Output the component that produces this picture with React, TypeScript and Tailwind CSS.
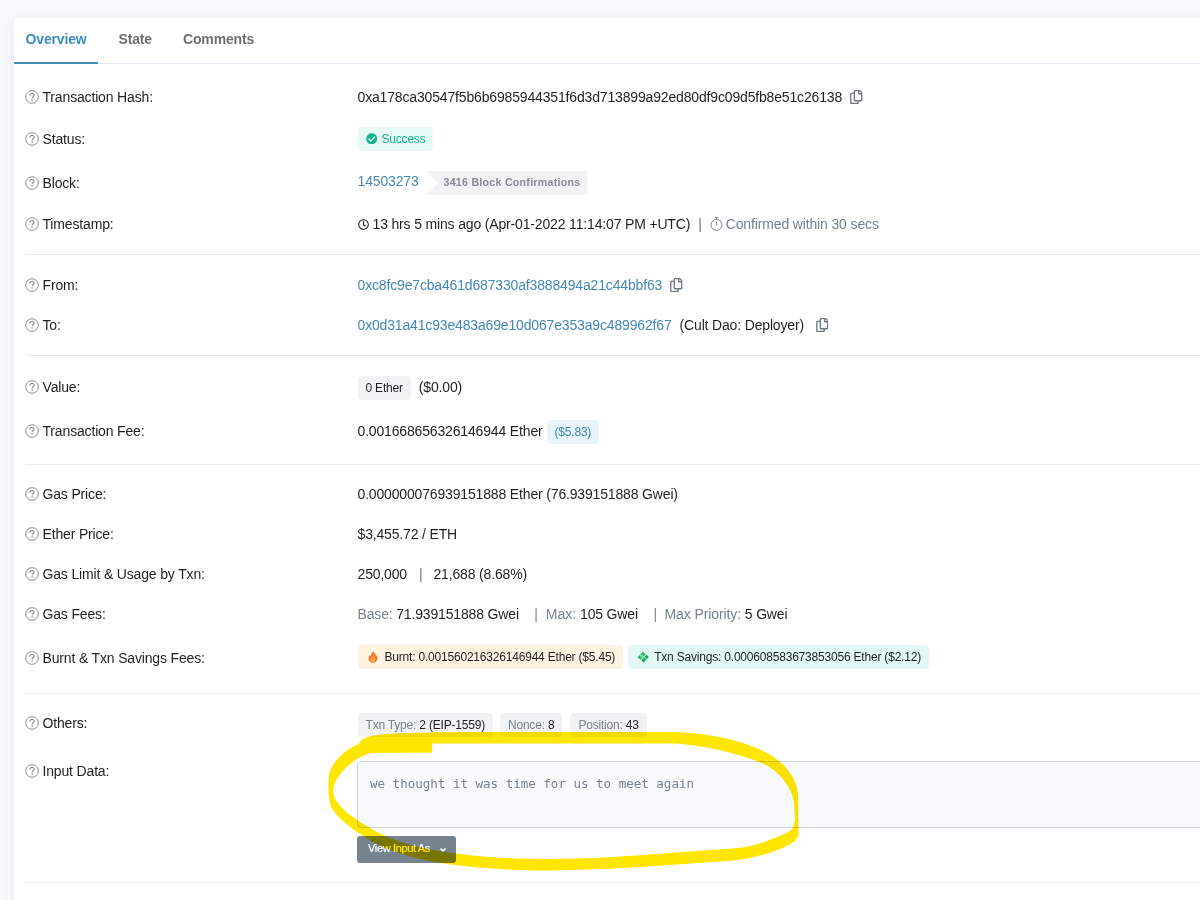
import type { ReactNode } from "react";
import { FaCheckCircle, FaChevronDown, FaRegClock, FaRegCopy } from "react-icons/fa";

function HelpIcon() {
  return (
    <svg viewBox="0 0 14 14" className="w-[14px] h-[14px] shrink-0 text-[#85878b]" fill="none" stroke="currentColor">
      <circle cx="7" cy="7" r="6.3" strokeWidth="0.95" />
      <path d="M4.9 5.4c0-1.3 1-1.9 2.1-1.9s2.1.6 2.1 1.8c0 1.5-2 1.4-2 3" strokeWidth="1.1" />
      <circle cx="7.05" cy="10.1" r="0.75" fill="currentColor" stroke="none" />
    </svg>
  );
}

function StopwatchIcon() {
  return (
    <svg viewBox="0 0 13 14" className="w-[13px] h-[14px] mb-[1px] shrink-0" fill="none" stroke="currentColor" strokeWidth="0.95">
      <circle cx="6.5" cy="7.9" r="5.5" />
      <path d="M4.7 0.7h3.6M6.5 0.7v1.7M6.5 4.8v3.6M10.5 3.7l1-1" />
    </svg>
  );
}

function FlameIcon() {
  return (
    <svg viewBox="0 0 10 12" className="w-[10px] h-[12px] ml-[2px] shrink-0">
      <path d="M5.3.2C5.4 2 9.6 4.2 9.5 7.5 9.4 10.2 7.5 11.8 5 11.8S.5 10.2.5 7.6C.5 5.8 1.4 4.6 2 3.8c.1.8.4 1.3.9 1.5C2.8 3.2 3.6 1.3 5.3.2z" fill="#ef7f2c" />
      <path d="M5.2 5c.3 1.4 2 2.1 2 4 0 1.4-1 2.3-2.2 2.3S2.7 10.4 2.7 9c0-1 .5-1.6.9-2.1.2.4.4.6.7.7C4.2 6.5 4.5 5.6 5.2 5z" fill="#fba545" />
    </svg>
  );
}

function SavingsIcon() {
  return (
    <svg viewBox="0 0 12 12" className="w-[12px] h-[12px] ml-[1px] shrink-0">
      <path d="M.4 6.3 5.7.7l3.1 2.5-5.2 5.6z" fill="#27b470" />
      <path d="M4.3 9.2 9.6 3.8l2.1 2.3-5.3 5.4z" fill="#169c5b" />
      <path d="m2.2 4.4 1.7-1.7 3.7 3-1.7 1.9z" fill="#7fe0ae" />
      <path d="m6.6 6.9 1.3-1.3 1.9 2-1.3 1.3z" fill="#55cf93" />
    </svg>
  );
}

function CopyIcon() {
  return <FaRegCopy className="w-[12.5px] h-[14px] mb-[1px] shrink-0 text-[#6f7885]" />;
}

function Badge({ className, children }: { className: string; children: ReactNode }) {
  return (
    <span className={`inline-flex items-center h-[24px] rounded-[4px] px-[8px] text-[12px] tracking-[-0.2px] whitespace-pre ${className}`}>
      {children}
    </span>
  );
}

function Row({ label, height, children }: { label: string; height: string; children: ReactNode }) {
  return (
    <div className={`flex items-center ${height}`}>
      <div className="flex items-center gap-[3.5px] w-[332.5px] shrink-0">
        <HelpIcon />
        <span className="mt-[1px]">{label}</span>
      </div>
      <div className="flex items-center mt-[1px] whitespace-pre">{children}</div>
    </div>
  );
}

function Section({ className, children }: { className: string; children: ReactNode }) {
  return <section className={`ml-[11px] border-b border-[#e9ecef] ${className}`}>{children}</section>;
}

export default function App() {
  return (
    <div className="relative w-[1200px] h-[900px] overflow-hidden bg-[#f8f9fb] pl-[14px] pt-[18px] font-['Liberation_Sans',Arial,sans-serif] text-[14px] tracking-[-0.16px] text-[#1e2022]">
      <div className="w-[1240px] h-[900px] rounded-[5px] bg-white shadow-[0_2px_12px_rgba(140,152,164,0.2)]">
        {/* Tabs */}
        <nav className="flex h-[46px] border-b border-[#e7eaf3] text-[14px] font-bold tracking-[-0.15px] text-[#6c6e72]">
          <span className="w-[84px] h-[46px] pl-[11.5px] leading-[43px] text-[#3b8cc0] border-b-2 border-[#4590ae]">Overview</span>
          <span className="pl-[20.5px] leading-[43px]">State</span>
          <span className="pl-[31px] leading-[43px]">Comments</span>
        </nav>

        <Section className="pt-[13px] pb-[11px]">
          <Row label="Transaction Hash:" height="h-[40px]">
            <span className="mr-[8px]">0xa178ca30547f5b6b6985944351f6d3d713899a92ed80df9c09d5fb8e51c26138</span>
            <CopyIcon />
          </Row>
          <Row label="Status:" height="h-[44px]">
            <Badge className="mb-[1px] pb-[1px] bg-[#e6f9f5] text-[#12b48c]">
              <FaCheckCircle className="w-[11.5px] h-[11.5px] mr-[4.5px]" />
              Success
            </Badge>
          </Row>
          <Row label="Block:" height="h-[44px]">
            <span className="text-[#4587b8] mb-[5px] mr-[8px]">14503273</span>
            <span className="inline-flex items-center h-[24px] w-[161px] mb-[1px] pb-[1px] pl-[17px] bg-[#f0f2f4] text-[#858b97] text-[10.6px] font-bold tracking-[0.28px] [clip-path:polygon(0_0,100%_0,100%_100%,0_100%,11px_50%)]">
              3416 Block Confirmations
            </span>
          </Row>
          <Row label="Timestamp:" height="h-[38px]">
            <FaRegClock className="w-[11px] h-[11px] mr-[4px]" />
            <span>13 hrs 5 mins ago (Apr-01-2022 11:14:07 PM +UTC)</span>
            <span className="ml-[8px] mr-[8px] text-[#6c757e]">|</span>
            <span className="flex items-center gap-[3px] tracking-[-0.14px] text-[#77838f]">
              <StopwatchIcon />
              Confirmed within 30 secs
            </span>
          </Row>
        </Section>

        <Section className="py-[10px]">
          <Row label="From:" height="h-[40px]">
            <span className="text-[#4587b8] mr-[8px]">0xc8fc9e7cba461d687330af3888494a21c44bbf63</span>
            <CopyIcon />
          </Row>
          <Row label="To:" height="h-[40px]">
            <span className="text-[#4587b8]">0x0d31a41c93e483a69e10d067e353a9c489962f67</span>
            <span className="ml-[8px] mr-[12px]">(Cult Dao: Deployer)</span>
            <CopyIcon />
          </Row>
        </Section>

        <Section className="pt-[9px] pb-[11px]">
          <Row label="Value:" height="h-[44px]">
            <Badge className="mt-[1px] pb-[1px] bg-[#f1f2f4]">0 Ether</Badge>
            <span className="ml-[8px] mb-[1px]">($0.00)</span>
          </Row>
          <Row label="Transaction Fee:" height="h-[44px]">
            <span className="mb-[1px]">0.001668656326146944 Ether</span>
            <Badge className="mt-[1px] ml-[4px] pb-[1px] bg-[#e9f4fa] text-[#4587b8]">($5.83)</Badge>
          </Row>
        </Section>

        <Section className="pt-[9px] pb-[12px]">
          <Row label="Gas Price:" height="h-[40px]">0.000000076939151888 Ether (76.939151888 Gwei)</Row>
          <Row label="Ether Price:" height="h-[40px]">$3,455.72 / ETH</Row>
          <Row label="Gas Limit & Usage by Txn:" height="h-[40px]">
            <span>250,000</span>
            <span className="ml-[12px] mr-[11px] text-[#6c757e]">|</span>
            <span>21,688 (8.68%)</span>
          </Row>
          <Row label="Gas Fees:" height="h-[40px]">
            <span><span className="text-[#77838f]">Base: </span>71.939151888 Gwei</span>
            <span className="ml-[15.5px]"><span className="text-[#77838f] tracking-[0px]">|  Max: </span>105 Gwei</span>
            <span className="ml-[15.5px]"><span className="text-[#77838f] tracking-[-0.1px]">|  Max Priority: </span>5 Gwei</span>
          </Row>
          <Row label="Burnt & Txn Savings Fees:" height="h-[47px]">
            <Badge className="mb-[2px] pb-[1px] bg-[#fcf3e2]">
              <FlameIcon />
              <span className="ml-[7px]">Burnt: 0.001560216326146944 Ether ($5.45)</span>
            </Badge>
            <Badge className="mb-[2px] ml-[5px] pb-[1px] bg-[#e3f8f4]">
              <SavingsIcon />
              <span className="ml-[5px]">Txn Savings: 0.000608583673853056 Ether ($2.12)</span>
            </Badge>
          </Row>
        </Section>

        <Section className="h-[189px] pt-[6px]">
          <Row label="Others:" height="h-[46px]">
            <Badge className="mt-[2px] bg-[#f1f2f4]"><span className="text-[#77838f]">Txn Type: </span>2 (EIP-1559)</Badge>
            <Badge className="mt-[2px] ml-[7px] bg-[#f1f2f4]"><span className="text-[#77838f]">Nonce: </span>8</Badge>
            <Badge className="mt-[2px] ml-[8px] bg-[#f1f2f4]"><span className="text-[#77838f]">Position: </span>43</Badge>
          </Row>
          <div className="flex items-start pt-[15px]">
            <div className="flex items-center gap-[3.5px] w-[332px] h-[20px] shrink-0">
              <HelpIcon />
              <span className="mt-[1px]">Input Data:</span>
            </div>
            <div>
              <div className="w-[880px] h-[67px] rounded-[4px] border border-[#d0d5db] bg-[#f8f9fb] pl-[12px] pt-[13px] font-['DejaVu_Sans_Mono',monospace] text-[12.52px] tracking-normal leading-[18px] text-[#77838f] whitespace-pre">
                we thought it was time for us to meet again
              </div>
              <button className="flex items-center mt-[8px] w-[99px] h-[27px] pl-[11px] pb-[2px] rounded-[3px] bg-[#77838f] text-white text-[11px] tracking-[-0.35px] [-webkit-text-stroke:0.2px]">
                View Input As
                <FaChevronDown className="w-[6px] h-[6px] mt-[2px] ml-[10px] stroke-[60px] stroke-current" />
              </button>
            </div>
          </div>
        </Section>
      </div>

      {/* Highlighter loop around the message */}
      <svg viewBox="0 0 1200 900" className="absolute left-0 top-0 w-[1200px] h-[900px] pointer-events-none mix-blend-multiply">
        <path
          fillRule="evenodd"
          fill="#ffe600"
          d="M359 744 C360 738 368 736 385 734 C420 732 470 732 500 732 L673 732 C715 733 752 743 773 756.5 C790 768 798 783 798 796 L798.5 834 C798 840 791 845 780 849 C765 855 749 859 727 861 L670 865 C630 868 590 870 550 870.5 C510 871 460 867 430 861 C400 855 380 847 365 837 C352 829 336 817 331 807 C328 798 328 785 329 775 C331 764 343 750 359 744 Z M432 743.5 L673 743.5 C705 745 745 755 766 765 C781 773 793 790 794 803 L795 820 C794 828 791 831 786 833 C770 840 757 846 738 848 L670 853 C630 856 585 859 550 859 C510 859 480 857 453 853 C425 850 395 842 375 831 C360 822 345 813 337 802 C332 795 332 786 337 779 C345 766 361 754 373 753 L432 752.5 Z"
        />
      </svg>
    </div>
  );
}
